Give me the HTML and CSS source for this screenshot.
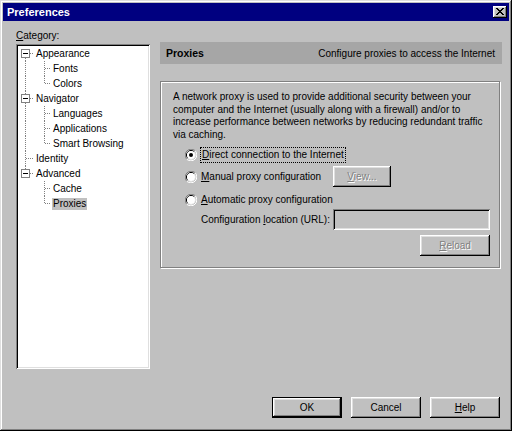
FILE: index.html
```html
<!DOCTYPE html>
<html>
<head>
<meta charset="utf-8">
<link rel="stylesheet" href="styles.css">
</head>
<body>
<div class="window">
  <div class="titlebar">
    <span class="title">Preferences</span>
    <span class="close">
      <svg width="8" height="7" viewBox="0 0 8 7"><path d="M0 0h2v1H0zM6 0h2v1H6zM1 1h2v1H1zM5 1h2v1H5zM2 2h4v1H2zM3 3h2v1H3zM2 4h4v1H2zM1 5h2v1H1zM5 5h2v1H5zM0 6h2v1H0zM6 6h2v1H6z" fill="#000"/></svg>
    </span>
  </div>
  <div class="body">
    <div class="main">
      <div class="left">
        <div class="cat-label"><u>C</u>ategory:</div>
        <div class="tree">
          <div class="trow">
            <svg class="c0" width="16" height="15"><path d="M7.5 12V15M12 7.5H16" class="dot"/><rect x="3.5" y="3.5" width="8" height="8" class="box"/><path d="M5 7.5H10" class="minus"/></svg>
            <span class="lbl">Appearance</span>
          </div>
          <div class="trow">
            <svg class="c0" width="16" height="15"><path d="M7.5 0V15" class="dot"/></svg>
            <svg class="c1" width="17" height="15"><path d="M10.5 0V15M11 7.5H17" class="dot"/></svg>
            <span class="lbl">Fonts</span>
          </div>
          <div class="trow">
            <svg class="c0" width="16" height="15"><path d="M7.5 0V15" class="dot"/></svg>
            <svg class="c1" width="17" height="15"><path d="M10.5 0V8M11 7.5H17" class="dot"/></svg>
            <span class="lbl">Colors</span>
          </div>
          <div class="trow">
            <svg class="c0" width="16" height="15"><path d="M7.5 0V3M7.5 12V15M12 7.5H16" class="dot"/><rect x="3.5" y="3.5" width="8" height="8" class="box"/><path d="M5 7.5H10" class="minus"/></svg>
            <span class="lbl">Navigator</span>
          </div>
          <div class="trow">
            <svg class="c0" width="16" height="15"><path d="M7.5 0V15" class="dot"/></svg>
            <svg class="c1" width="17" height="15"><path d="M10.5 0V15M11 7.5H17" class="dot"/></svg>
            <span class="lbl">Languages</span>
          </div>
          <div class="trow">
            <svg class="c0" width="16" height="15"><path d="M7.5 0V15" class="dot"/></svg>
            <svg class="c1" width="17" height="15"><path d="M10.5 0V15M11 7.5H17" class="dot"/></svg>
            <span class="lbl">Applications</span>
          </div>
          <div class="trow">
            <svg class="c0" width="16" height="15"><path d="M7.5 0V15" class="dot"/></svg>
            <svg class="c1" width="17" height="15"><path d="M10.5 0V8M11 7.5H17" class="dot"/></svg>
            <span class="lbl">Smart Browsing</span>
          </div>
          <div class="trow">
            <svg class="c0" width="16" height="15"><path d="M7.5 0V15M8 7.5H16" class="dot"/></svg>
            <span class="lbl">Identity</span>
          </div>
          <div class="trow">
            <svg class="c0" width="16" height="15"><path d="M7.5 0V3M12 7.5H16" class="dot"/><rect x="3.5" y="3.5" width="8" height="8" class="box"/><path d="M5 7.5H10" class="minus"/></svg>
            <span class="lbl">Advanced</span>
          </div>
          <div class="trow">
            <svg class="c0" width="16" height="15"></svg>
            <svg class="c1" width="17" height="15"><path d="M10.5 0V15M11 7.5H17" class="dot"/></svg>
            <span class="lbl">Cache</span>
          </div>
          <div class="trow">
            <svg class="c0" width="16" height="15"></svg>
            <svg class="c1" width="17" height="15"><path d="M10.5 0V8M11 7.5H17" class="dot"/></svg>
            <span class="lbl sel">Proxies</span>
          </div>
        </div>
      </div>
      <div class="right">
        <div class="header">
          <span class="h-title">Proxies</span>
          <span class="h-desc">Configure proxies to access the Internet</span>
        </div>
        <div class="group">
          <p class="para">A network proxy is used to provide additional security between your<br>computer and the Internet (usually along with a firewall) and/or to<br>increase performance between networks by reducing redundant traffic<br>via caching.</p>
          <div class="row r-direct">
            <svg class="radio" width="12" height="12" viewBox="0 0 12 12"><path d="M10.24 1.76A6 6 0 0 0 1.76 10.24" class="r-out-d"/><path d="M1.76 10.24A6 6 0 0 0 10.24 1.76" class="r-out-l"/><path d="M9.18 2.82A4.5 4.5 0 0 0 2.82 9.18" class="r-in-d"/><path d="M2.82 9.18A4.5 4.5 0 0 0 9.18 2.82" class="r-in-l"/><circle cx="6" cy="6" r="4" fill="#fff"/><circle cx="6" cy="6" r="2" fill="#000"/></svg>
            <span class="focus"><u>D</u>irect connection to the Internet</span>
          </div>
          <div class="row r-manual">
            <div class="lead">
              <svg class="radio" width="12" height="12" viewBox="0 0 12 12"><path d="M10.24 1.76A6 6 0 0 0 1.76 10.24" class="r-out-d"/><path d="M1.76 10.24A6 6 0 0 0 10.24 1.76" class="r-out-l"/><path d="M9.18 2.82A4.5 4.5 0 0 0 2.82 9.18" class="r-in-d"/><path d="M2.82 9.18A4.5 4.5 0 0 0 9.18 2.82" class="r-in-l"/><circle cx="6" cy="6" r="4" fill="#fff"/></svg>
              <span><u>M</u>anual proxy configuration</span>
            </div>
            <span class="btn disabled view"><span><u>V</u>iew...</span></span>
          </div>
          <div class="row r-auto">
            <svg class="radio" width="12" height="12" viewBox="0 0 12 12"><path d="M10.24 1.76A6 6 0 0 0 1.76 10.24" class="r-out-d"/><path d="M1.76 10.24A6 6 0 0 0 10.24 1.76" class="r-out-l"/><path d="M9.18 2.82A4.5 4.5 0 0 0 2.82 9.18" class="r-in-d"/><path d="M2.82 9.18A4.5 4.5 0 0 0 9.18 2.82" class="r-in-l"/><circle cx="6" cy="6" r="4" fill="#fff"/></svg>
            <span><u>A</u>utomatic proxy configuration</span>
          </div>
          <div class="row r-config">
            <div class="lead indent"><span>Configuration <u>l</u>ocation (URL):</span></div>
            <div class="input"></div>
          </div>
          <div class="row r-reload">
            <span class="btn disabled reload"><span><u>R</u>eload</span></span>
          </div>
        </div>
      </div>
    </div>
    <div class="buttons">
      <span class="btn default">OK</span>
      <span class="btn">Cancel</span>
      <span class="btn"><span><u>H</u>elp</span></span>
    </div>
  </div>
</div>
</body>
</html>
```
FILE: styles.css
```css
* { box-sizing: border-box; }
html, body { margin: 0; padding: 0; }
body {
  width: 512px;
  height: 431px;
  overflow: hidden;
  background: #c0c0c0;
  font-family: "Liberation Sans", Arial, sans-serif;
  font-size: 10px;
  color: #000;
}
.window {
  width: 512px;
  height: 431px;
  padding: 3px;
  background: #c0c0c0;
  box-shadow: inset -1px -1px #000, inset 1px 1px #dfdfdf, inset -2px -2px #808080, inset 2px 2px #fff;
  display: flex;
  flex-direction: column;
}
.titlebar {
  height: 18px;
  flex: none;
  background: #000080;
  display: flex;
  align-items: center;
  justify-content: space-between;
  padding: 0 2px 0 4px;
}
.title {
  color: #fff;
  font-weight: bold;
  font-size: 11px;
}
.close {
  width: 14px;
  height: 12px;
  background: #c0c0c0;
  box-shadow: inset -1px -1px #000, inset 1px 1px #fff, inset -2px -2px #808080, inset 2px 2px #dfdfdf;
  display: flex;
  align-items: center;
  justify-content: center;
  padding-bottom: 1px;
}
.close svg { display: block; }
.body {
  flex: 1;
  padding: 9px 7px 0 13px;
  display: flex;
  flex-direction: column;
}
.main {
  display: flex;
  gap: 10px;
  height: 339px;
}
.left {
  width: 134px;
  display: flex;
  flex-direction: column;
}
.cat-label {
  height: 12px;
  line-height: 12px;
  margin-bottom: 2px;
}
.tree {
  height: 325px;
  background: #fff;
  box-shadow: inset 1px 1px #808080, inset -1px -1px #fff, inset 2px 2px #000, inset -2px -2px #dfdfdf;
  padding: 2px;
}
.trow {
  height: 15px;
  display: flex;
  align-items: center;
}
.trow svg { display: block; flex: none; }
.dot {
  fill: none;
  stroke: #808080;
  stroke-width: 1;
  stroke-dasharray: 1 1;
  shape-rendering: crispEdges;
}
.box {
  fill: #fff;
  stroke: #808080;
  stroke-width: 1;
  shape-rendering: crispEdges;
}
.minus {
  stroke: #000;
  stroke-width: 1;
  shape-rendering: crispEdges;
}
.lbl {
  margin-left: 1px;
  padding: 0 1px;
  line-height: 12px;
  white-space: nowrap;
}
.sel { background: #c0c0c0; }
.right {
  flex: 1;
  padding-top: 12px;
  display: flex;
  flex-direction: column;
}
.header {
  height: 22px;
  background: #a6a6a6;
  display: flex;
  align-items: center;
  justify-content: space-between;
  padding: 0 7px 0 6px;
}
.h-title {
  font-weight: bold;
  font-size: 10.5px;
}
.group {
  margin-top: 17px;
  margin-right: 2px;
  height: 187px;
  border: 1px solid #808080;
  box-shadow: inset 1px 1px #fff, 1px 1px #fff;
  padding: 9px 9px 0 12px;
  display: flex;
  flex-direction: column;
}
.para {
  margin: 0;
  line-height: 12.5px;
  white-space: nowrap;
}
.row {
  display: flex;
  align-items: center;
}
.radio { display: block; flex: none; margin-right: 4px; }
.r-out-d { fill: none; stroke: #808080; stroke-width: 1; }
.r-out-l { fill: none; stroke: #fff; stroke-width: 1; }
.r-in-d { fill: none; stroke: #000; stroke-width: 1; }
.r-in-l { fill: none; stroke: #dfdfdf; stroke-width: 1; }
.r-direct { margin-top: 4px; height: 20px; margin-left: 12px; }
.r-manual { margin-top: 1px; height: 21px; margin-left: 12px; }
.r-auto { margin-top: 3px; height: 19px; margin-left: 12px; }
.r-config { height: 21px; margin-left: 12px; }
.r-reload { margin-top: 5px; height: 21px; justify-content: flex-end; }
.lead {
  width: 148px;
  flex: none;
  display: flex;
  align-items: center;
}
.indent { padding-left: 16px; }
.focus {
  outline: 1px dotted #000;
  padding: 1px 1px;
  line-height: 12px;
}
.input {
  width: 157px;
  height: 21px;
  background: #c0c0c0;
  box-shadow: inset 1px 1px #808080, inset -1px -1px #fff, inset 2px 2px #000, inset -2px -2px #dfdfdf;
}
.btn {
  width: 70px;
  height: 21px;
  background: #c0c0c0;
  box-shadow: inset -1px -1px #000, inset 1px 1px #fff, inset -2px -2px #808080, inset 2px 2px #dfdfdf;
  display: flex;
  align-items: center;
  justify-content: center;
  flex: none;
}
.btn.default {
  border: 1px solid #000;
}
.btn.disabled {
  color: #808080;
  text-shadow: 1px 1px 0 #fff;
}
.view { width: 58px; }
.buttons {
  margin-top: 28px;
  display: flex;
  justify-content: flex-end;
  gap: 9px;
  padding-right: 2px;
}
```
